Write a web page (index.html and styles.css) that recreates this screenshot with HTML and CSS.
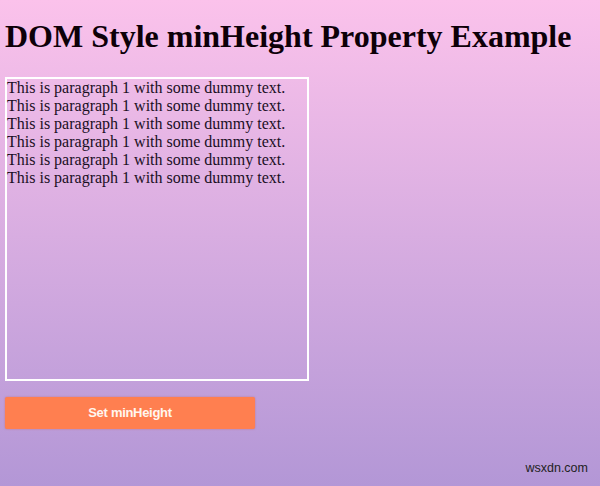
FILE: index.html
```html
<!DOCTYPE html>
<html>
<head>
<meta charset="utf-8">
<link rel="stylesheet" href="styles.css">
</head>
<body>
<h1 class="title">DOM Style minHeight Property Example</h1>
<div class="box">
<p class="line">This is paragraph 1 with some dummy text.</p>
<p class="line">This is paragraph 1 with some dummy text.</p>
<p class="line">This is paragraph 1 with some dummy text.</p>
<p class="line">This is paragraph 1 with some dummy text.</p>
<p class="line">This is paragraph 1 with some dummy text.</p>
<p class="line">This is paragraph 1 with some dummy text.</p>
</div>
<button class="btn">Set minHeight</button>
<div class="watermark">wsxdn.com</div>
</body>
</html>
```
FILE: styles.css
```css
html {
  height: 100%;
  background: linear-gradient(#fbc2eb 0, #a18cd1 607px);
  background-repeat: no-repeat;
  background-color: #a18cd1;
}
body {
  margin: 0;
  padding: 0 5px;
  height: 486px;
  box-sizing: border-box;
  font-family: "Liberation Serif", "Times New Roman", serif;
  color: #111;
  position: relative;
  overflow: hidden;
}
.title {
  font-size: 32px;
  font-weight: bold;
  margin: 18px 0 22px;
  line-height: 37px;
  color: #0d0008;
}
.box {
  width: 300px;
  height: 300px;
  border: 2px solid #fff;
  font-size: 16px;
  line-height: 18px;
  color: #1a0f1f;
}
.line {
  margin: 0;
}
.btn {
  display: block;
  margin-top: 16px;
  width: 250px;
  height: 32px;
  border: none;
  border-radius: 2px;
  background: #ff7f50;
  color: #fff6ee;
  font-family: "Liberation Sans", Arial, sans-serif;
  font-weight: bold;
  font-size: 13px;
  letter-spacing: -0.3px;
  padding-bottom: 2px;
  box-shadow: 0 0 2px rgba(200, 90, 80, 0.6);
}
.watermark {
  position: absolute;
  right: 12px;
  bottom: 11px;
  font-family: "Liberation Sans", Arial, sans-serif;
  font-size: 12.5px;
  color: #222;
}
```
